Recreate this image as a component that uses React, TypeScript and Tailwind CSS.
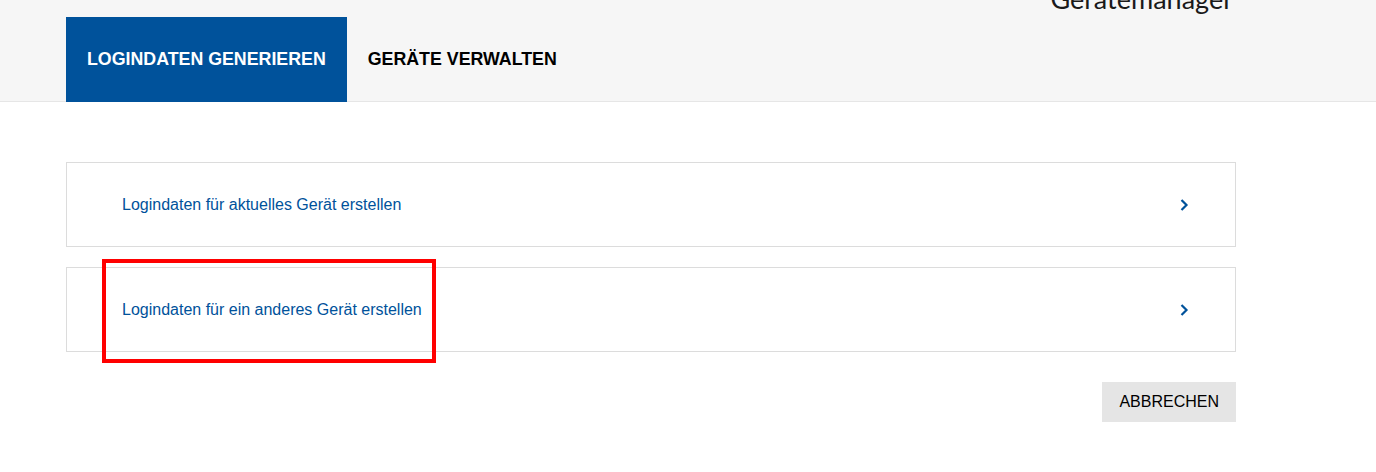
import React from 'react';

const Chevron = () => (
  <svg width="10" height="14" viewBox="0 0 10 14" className="shrink-0">
    <path d="M2.5 2 L7.5 7 L2.5 12" fill="none" stroke="#00529b" strokeWidth="2.2" />
  </svg>
);

const OptionCard = ({ label, highlight }: { label: string; highlight?: boolean }) => (
  <div className="relative flex h-[85px] items-center justify-between border border-[#dcdcdc] bg-white pl-[55px] pr-[46px]">
    <span className="text-[16px] text-[#00529b]">{label}</span>
    <Chevron />
    {highlight && (
      <div className="pointer-events-none absolute left-[35px] top-[-9px] h-[104px] w-[334px] border-4 border-[#ff0000]" />
    )}
  </div>
);

export default function App() {
  return (
    <div className="min-h-[472px] bg-white" style={{ fontFamily: '"Liberation Sans", Arial, sans-serif' }}>
      <div className="border-b border-[#e6e6e6] bg-[#f6f6f6]">
        <div className="ml-[66px] w-[1170px]">
          <div className="flex h-[17px] justify-end overflow-hidden pr-[3px]">
            <span
              className="-mt-[18px] text-[27px] font-normal leading-[34px] text-[#1a1a1a]"
              style={{ fontFamily: 'Lato, "Open Sans", sans-serif' }}
            >
              Gerätemanager
            </span>
          </div>
          <div className="-mb-px flex h-[85px]">
            <div className="flex items-center bg-[#00529b] px-[21px] text-[17.8px] font-bold text-white">
              LOGINDATEN GENERIEREN
            </div>
            <div className="flex items-center px-[21px] text-[17.8px] font-bold text-black">
              GERÄTE VERWALTEN
            </div>
          </div>
        </div>
      </div>
      <div className="ml-[66px] w-[1170px] pt-[60px]">
        <div className="flex flex-col gap-[20px]">
          <OptionCard label="Logindaten für aktuelles Gerät erstellen" />
          <OptionCard label="Logindaten für ein anderes Gerät erstellen" highlight />
        </div>
        <div className="mt-[30px] flex justify-end">
          <button className="h-[40px] bg-[#e5e5e5] px-[17px] text-[16px] text-black">ABBRECHEN</button>
        </div>
      </div>
    </div>
  );
}
